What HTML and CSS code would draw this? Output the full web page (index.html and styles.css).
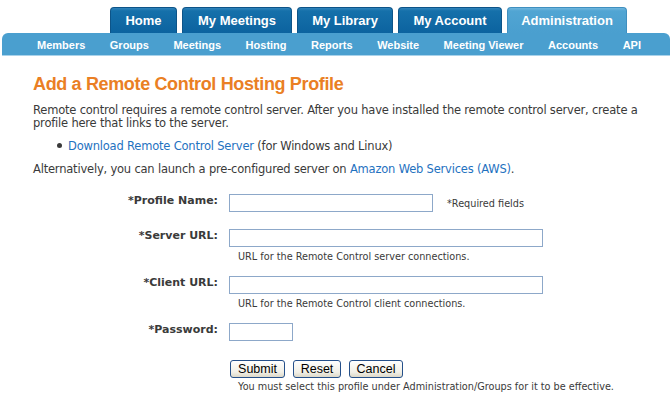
FILE: index.html
```html
<!DOCTYPE html>
<html>
<head>
<meta charset="utf-8">
<link rel="stylesheet" href="styles.css">
</head>
<body>
<div class="header">
  <ul class="tabs">
    <li><a class="tab tab-home" href="#">Home</a></li>
    <li><a class="tab tab-meetings" href="#">My Meetings</a></li>
    <li><a class="tab tab-library" href="#">My Library</a></li>
    <li><a class="tab tab-account" href="#">My Account</a></li>
    <li><a class="tab tab-admin tab-active" href="#">Administration</a></li>
  </ul>
  <ul class="subnav">
    <li><a href="#">Members</a></li>
    <li><a href="#">Groups</a></li>
    <li><a href="#">Meetings</a></li>
    <li><a href="#">Hosting</a></li>
    <li><a href="#">Reports</a></li>
    <li><a href="#">Website</a></li>
    <li><a href="#">Meeting Viewer</a></li>
    <li><a href="#">Accounts</a></li>
    <li><a href="#">API</a></li>
  </ul>
</div>
<div class="content">
  <h1 class="title">Add a Remote Control Hosting Profile</h1>
  <p class="text">Remote control requires a remote control server. After you have installed the remote control server, create a profile here that links to the server.</p>
  <ul class="bullets">
    <li><a class="link" href="#">Download Remote Control Server</a> (for Windows and Linux)</li>
  </ul>
  <p class="text text-alt">Alternatively, you can launch a pre-configured server on <a class="link" href="#">Amazon Web Services (AWS)</a>.</p>

  <form class="form">
    <div class="row row-name">
      <label class="label">*Profile Name:</label>
      <div class="field field-inline">
        <input class="input input-name" type="text">
        <span class="required">*Required fields</span>
      </div>
    </div>
    <div class="row row-url">
      <label class="label">*Server URL:</label>
      <div class="field">
        <input class="input input-url" type="text">
        <div class="hint">URL for the Remote Control server connections.</div>
      </div>
    </div>
    <div class="row row-url">
      <label class="label">*Client URL:</label>
      <div class="field">
        <input class="input input-url" type="text">
        <div class="hint">URL for the Remote Control client connections.</div>
      </div>
    </div>
    <div class="row row-pass">
      <label class="label">*Password:</label>
      <div class="field">
        <input class="input input-pass" type="password">
      </div>
    </div>
    <div class="row row-buttons">
      <span class="label"></span>
      <div class="field">
        <div class="buttons">
          <button class="btn btn-submit" type="button">Submit</button>
          <button class="btn btn-reset" type="button">Reset</button>
          <button class="btn btn-cancel" type="button">Cancel</button>
        </div>
        <div class="hint hint-note">You must select this profile under Administration/Groups for it to be effective.</div>
      </div>
    </div>
  </form>
</div>
</body>
</html>
```

FILE: styles.css
```css
* { box-sizing: border-box; }

body {
  margin: 0;
  background: #ffffff;
  font-family: "DejaVu Sans", Verdana, sans-serif;
  color: #3a3a3a;
}

ul { list-style: none; margin: 0; padding: 0; }
a { text-decoration: none; }

.header {
  padding-top: 7px;
}

.tabs {
  display: flex;
  gap: 5px;
  padding-left: 110px;
  height: 26px;
}

.tab {
  display: block;
  height: 26px;
  line-height: 25px;
  white-space: nowrap;
  font-family: "Liberation Sans", Arial, sans-serif;
  font-weight: bold;
  font-size: 13px;
  color: #ffffff;
  background: linear-gradient(#2f83bb 0, #1570aa 3px, #0c639f 100%);
  border: 1px solid #0d5488;
  border-bottom: none;
  border-radius: 4px 4px 0 0;
  text-align: center;
}

.tab-home { width: 67px; }
.tab-meetings { width: 110px; }
.tab-library { width: 96px; }
.tab-account { width: 104px; }
.tab-admin { width: 120px; }

.tab-active {
  background: linear-gradient(#6fb6de 0, #51a5d3 3px, #4a9fcf 100%);
  border-color: #3f8fbf;
}

.subnav {
  display: flex;
  margin: 0 1px 0 2px;
  padding: 0 0 2px 35px;
  gap: 24.5px;
  height: 23px;
  align-items: center;
  background: #4a9fcf;
  border-radius: 6px 6px 0 0;
  border-bottom: 1px solid #a9d2ea;
}

.subnav a {
  white-space: nowrap;
  font-family: "Liberation Sans", Arial, sans-serif;
  font-weight: bold;
  font-size: 11px;
  color: #ffffff;
}

.content {
  padding: 0 20px 0 33px;
}

.title {
  margin: 17px 0 0;
  font-family: "Liberation Sans", Arial, sans-serif;
  font-size: 18px;
  letter-spacing: -0.35px;
  line-height: 22px;
  font-weight: bold;
  color: #ea7f24;
}

.text {
  margin: 9px 0 0;
  font-size: 11.5px;
  letter-spacing: -0.2px;
  line-height: 13px;
}

.text-alt {
  margin-top: 10px;
}

.link { color: #1f72bf; }

.bullets {
  margin: 10px 0 0;
  padding-left: 24px;
  font-size: 11.5px;
  letter-spacing: -0.2px;
  line-height: 13px;
}

.bullets li::before {
  content: "";
  display: inline-block;
  vertical-align: middle;
  width: 5px;
  height: 5px;
  border-radius: 50%;
  background: #3a3a3a;
  margin: -2px 6px 0 0;
}

.form {
  margin-top: 18px;
}

.row {
  display: grid;
  grid-template-columns: 185px 1fr;
  column-gap: 11px;
  align-items: start;
}

.row-name { margin-bottom: 17px; }
.row-url { margin-bottom: 13px; }
.row-pass { margin-bottom: 19px; }

.label {
  text-align: right;
  font-size: 11px;
  font-weight: bold;
  color: #3a3a3a;
  line-height: 18px;
  margin-top: -2px;
}

.field-inline {
  display: flex;
  align-items: center;
  gap: 14px;
}

.input {
  display: block;
  height: 18px;
  border: 1px solid #8da8c9;
  background: #ffffff;
  padding: 0 2px;
  font-size: 11px;
}

.input-name { width: 204px; }
.input-url { width: 314px; }
.input-pass { width: 64px; }

.required {
  font-size: 9.7px;
  color: #3a3a3a;
}

.hint {
  margin: 4px 0 0 9px;
  font-size: 9.7px;
  line-height: 12px;
  color: #3a3a3a;
  white-space: nowrap;
}

.hint-note {
  margin-top: 3px;
}

.buttons {
  display: flex;
  gap: 8px;
  padding-left: 1px;
}

.btn {
  height: 18px;
  padding: 0;
  font-family: "Liberation Sans", Arial, sans-serif;
  font-size: 12.5px;
  color: #000000;
  background: linear-gradient(#ffffff, #f1efe6 70%, #dcd8c8);
  border: 1px solid #25508a;
  border-radius: 3px;
  line-height: 15px;
}

.btn-submit { width: 55px; }
.btn-reset { width: 48px; }
.btn-cancel { width: 54px; }
```
